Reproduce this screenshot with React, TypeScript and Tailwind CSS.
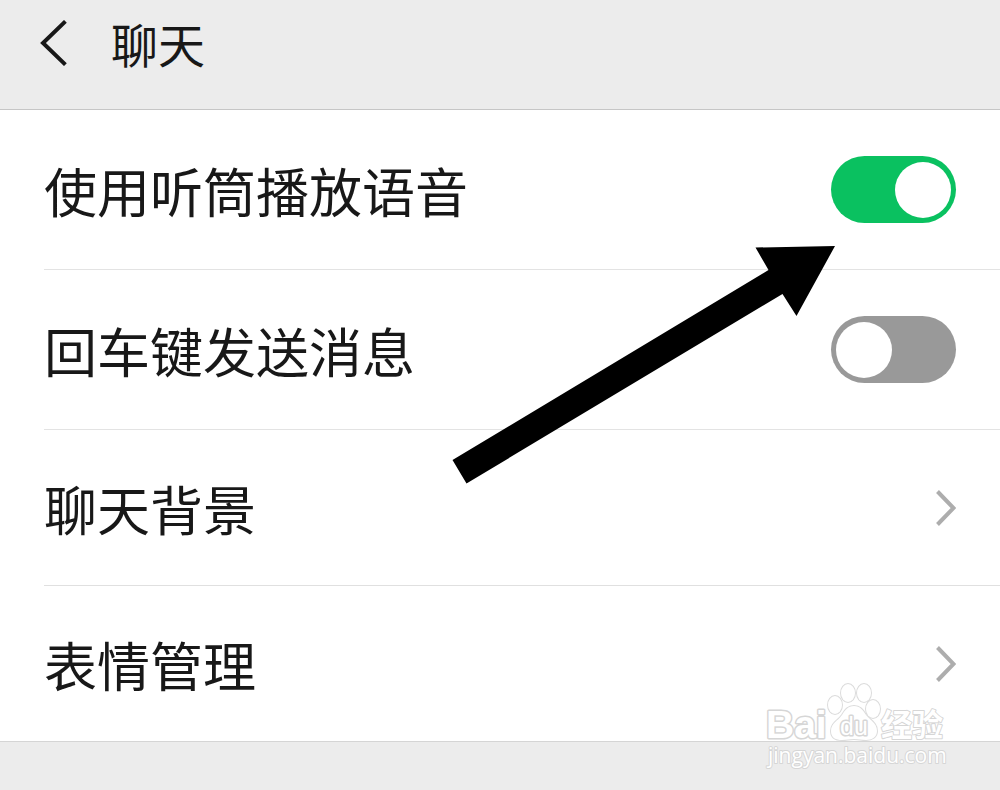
import { useState } from 'react';

export default function App() {
  const [earpiece, setEarpiece] = useState(true);
  const [enterToSend, setEnterToSend] = useState(false);

  return (
    <main className="relative min-h-screen w-full overflow-hidden bg-[#ececec] font-['Noto_Sans_CJK_SC',sans-serif] text-[#181818]">
      {/* Header */}
      <header className="flex h-[110px] items-start border-b border-[#c6c6c6] pt-2 pl-10">
        <button type="button" aria-label="返回" className="mt-3">
          <svg width="27" height="46" viewBox="0 0 27 46" fill="none" stroke="currentColor" strokeWidth="4">
            <path d="M25.4 1.4 3 23 25.4 44.6" />
          </svg>
        </button>
        <h1 className="ml-11 text-[47px] leading-[70px]">聊天</h1>
      </header>

      {/* Settings list */}
      <div className="relative">
        <ul className="border-b border-[#d5d5d5] bg-white pl-11">
          <SwitchRow label="使用听筒播放语音" checked={earpiece} onChange={setEarpiece} />
          <SwitchRow label="回车键发送消息" checked={enterToSend} onChange={setEnterToSend} />
          <LinkRow label="聊天背景" />
          <LinkRow label="表情管理" last />
        </ul>

        <PointerArrow />
        <Watermark />
      </div>
    </main>
  );
}

function SwitchRow({
  label,
  checked,
  onChange,
}: {
  label: string;
  checked: boolean;
  onChange: (value: boolean) => void;
}) {
  return (
    <li className="border-b border-[#e3e3e3]">
      <label className="flex h-[159px] items-center justify-between pr-11">
        <span className="text-[53px] leading-[80px]">{label}</span>
        <input
          type="checkbox"
          role="switch"
          checked={checked}
          onChange={(e) => onChange(e.target.checked)}
          className="flex h-[67px] w-[125px] shrink-0 appearance-none items-center rounded-full bg-[#999999] px-[5px] before:size-14 before:rounded-full before:bg-white before:content-[''] checked:justify-end checked:bg-[#0ac160]"
        />
      </label>
    </li>
  );
}

function LinkRow({ label, last = false }: { label: string; last?: boolean }) {
  return (
    <li className={last ? '' : 'border-b border-[#e0e0e0]'}>
      <a href="#" className="flex h-[155px] items-center justify-between pr-11">
        <span className="text-[53px] leading-[80px]">{label}</span>
        <svg width="20" height="36" viewBox="0 0 20 36" fill="none" stroke="#adadad" strokeWidth="4">
          <path d="M1.5 1.5 17.5 18 1.5 34.5" />
        </svg>
      </a>
    </li>
  );
}

/* Points at the first switch */
function PointerArrow() {
  return (
    <svg
      className="pointer-events-none absolute top-[136px] right-[165px]"
      width="383"
      height="238"
      viewBox="0 0 383 238"
      aria-hidden="true"
    >
      <path d="M.5 214 316.5 24 303.5 1.5 383 0 344.5 70 330.5 48 14.5 237.5Z" fill="#000" />
    </svg>
  );
}

function Watermark() {
  return (
    <svg
      className="pointer-events-none absolute top-[570px] right-[50px]"
      width="190"
      height="94"
      viewBox="0 0 190 94"
      fill="#fff"
      stroke="#d6d6d6"
      strokeWidth="2"
      strokeLinejoin="round"
      paintOrder="stroke"
    >
      <text x="6" y="58" fontFamily="Liberation Sans" fontWeight="700" fontSize="39" strokeWidth="3">
        Bai
      </text>
      <g strokeWidth="2" stroke="#dcdcdc">
        <ellipse cx="75" cy="25" rx="7" ry="9" />
        <ellipse cx="88" cy="13" rx="7" ry="9" />
        <ellipse cx="104" cy="13" rx="7" ry="9" />
        <ellipse cx="113" cy="29" rx="7" ry="9" />
        <path d="M94 26c-6 0-9 4-12 9-4 6-11 8-11 16 0 7 5 9 11 9 5 0 7-1 12-1s7 1 12 1c6 0 11-3 11-9 0-8-7-11-11-16-3-5-6-9-12-9Z" />
      </g>
      <text x="80" y="55" fontFamily="Liberation Sans" fontSize="25" strokeWidth="3">
        du
      </text>
      <text x="121" y="56" fontFamily="Noto Sans CJK SC" fontWeight="700" fontSize="31">
        经验
      </text>
      <text x="8" y="83" fontFamily="Open Sans" fontSize="21">
        jingyan.baidu.com
      </text>
    </svg>
  );
}
